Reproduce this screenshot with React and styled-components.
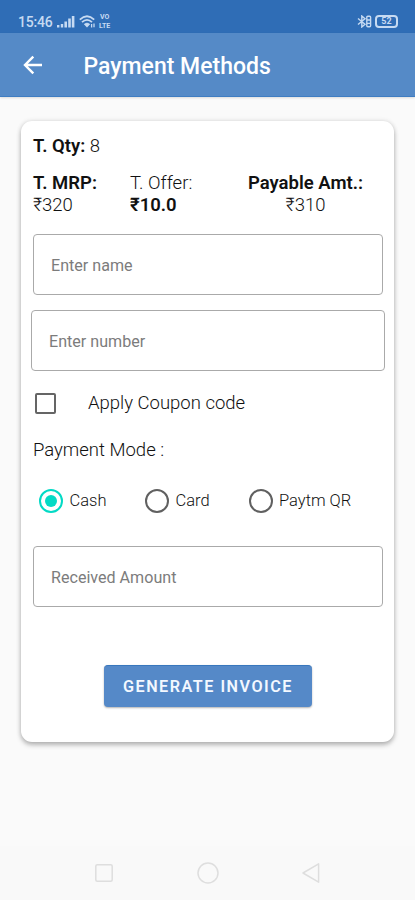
import React, { useState } from 'react';
import styled, { createGlobalStyle } from 'styled-components';

const PAYMENT_MODES = [
  { label: 'Cash', width: '106px' },
  { label: 'Card', width: '103.5px' },
  { label: 'Paytm QR', width: 'auto' },
];

const StatusBar = () => (
  <StatusBarWrapper>
    <Clock>15:46</Clock>
    <svg width='18' height='12' viewBox='0 0 18 12' fill='#c6daf2'>
      <rect x='0' y='9' width='2.4' height='2.5' />
      <rect x='3.8' y='8' width='2.4' height='3.5' />
      <rect x='7.4' y='5.5' width='2.6' height='6' />
      <rect x='11.2' y='2.5' width='2.6' height='9' />
      <rect x='14.8' y='0' width='2.6' height='11.5' />
    </svg>
    <WifiIcon width='17' height='13' viewBox='0 0 17 13' fill='none' stroke='#c6daf2'>
      <path d='M.8 4.6Q8 -2 15.2 4.6M3 7.2Q8 2.6 13 7.2' strokeWidth='1.8' />
      <path d='M5.2 9.2Q8 6.9 10.8 9.2L8 12.2Z' fill='#c6daf2' strokeWidth='.6' />
      <path d='M12.6 9v3.6M15 8.6v3.6' strokeWidth='1.3' />
    </WifiIcon>
    <VoLte>
      <span>VO</span>
      <span>LTE</span>
    </VoLte>
    <StatusRight>
      <svg width='15' height='13' viewBox='0 0 15 13' fill='none' stroke='#c6daf2'>
        <path d='M1 3.5L8 9.2L4.8 12V1L8 3.8L1 9.5' strokeWidth='1.4' />
        <rect x='9.8' y='1.2' width='3.8' height='10.5' rx='1' strokeWidth='1.4' />
        <path d='M10 5h3M10 8.4h3' strokeWidth='1.4' />
      </svg>
      <Battery>52</Battery>
    </StatusRight>
  </StatusBarWrapper>
);

const TextField = ({ label, wide }) => (
  <FieldBox $wide={wide}>
    <FieldLabel>{label}</FieldLabel>
  </FieldBox>
);

const App = () => {
  const [mode, setMode] = useState('Cash');
  const [coupon, setCoupon] = useState(false);

  return (
    <Screen>
      <GlobalStyle />
      <StatusBar />
      <Toolbar>
        <svg width='20' height='20' viewBox='0 0 20 20' fill='none' stroke='#fff' strokeWidth='2.4'>
          <path d='M19 10H2.5M10.3 1.6L2 10L10.3 18.4' />
        </svg>
        <Title>Payment Methods</Title>
      </Toolbar>
      <Content>
        <Card>
          <Quantity>
            <b>T. Qty:</b> 8
          </Quantity>
          <Totals>
            <Total $width='97px'>
              <b>T. MRP:</b>
              <span>₹320</span>
            </Total>
            <Total $width='118px'>
              <span>T. Offer:</span>
              <b>₹10.0</b>
            </Total>
            <Total $align='center'>
              <b>Payable Amt.:</b>
              <span>₹310</span>
            </Total>
          </Totals>
          <TextField label='Enter name' />
          <TextField label='Enter number' wide />
          <CouponRow onClick={() => setCoupon(!coupon)}>
            <CheckBox $checked={coupon} />
            Apply Coupon code
          </CouponRow>
          <SectionLabel>Payment Mode :</SectionLabel>
          <RadioGroup>
            {PAYMENT_MODES.map((v) => (
              <RadioItem key={v.label} $width={v.width} onClick={() => setMode(v.label)}>
                <Radio $checked={mode === v.label} />
                {v.label}
              </RadioItem>
            ))}
          </RadioGroup>
          <TextField label='Received Amount' />
          <InvoiceBtn>GENERATE INVOICE</InvoiceBtn>
        </Card>
      </Content>
      <NavBar>
        <svg width='20' height='20' viewBox='0 0 20 20'>
          <rect x='1.8' y='1.8' width='16.4' height='16.4' rx='1.5' />
        </svg>
        <svg width='22' height='22' viewBox='0 0 22 22'>
          <circle cx='11' cy='11' r='10' />
        </svg>
        <svg width='20' height='22' viewBox='0 0 20 22'>
          <path d='M17.6 1.8V20.2L2 11Z' strokeLinejoin='round' />
        </svg>
      </NavBar>
    </Screen>
  );
};

const GlobalStyle = createGlobalStyle`
  * {
    box-sizing: border-box;
  }
  body {
    margin: 0;
    font-family: Roboto, 'Noto Sans', sans-serif;
    color: #111;
    background: #fafafa;
  }
  b {
    font-weight: 600;
    color: #111;
  }
`;
const Screen = styled.div`
  width: 415px;
  height: 900px;
  display: flex;
  flex-direction: column;
  overflow: hidden;
  background: #fafafa;
`;
const StatusBarWrapper = styled.div`
  height: 33px;
  flex: none;
  display: flex;
  align-items: center;
  padding: 10px 17px 0 18px;
  background: #2f6db6;
`;
const Clock = styled.span`
  width: 39px;
  font-size: 14px;
  font-weight: 500;
  line-height: 16px;
  letter-spacing: -0.2px;
  color: #c6daf2;
`;
const WifiIcon = styled.svg`
  margin: 0 3px 0 4px;
`;
const VoLte = styled.div`
  display: flex;
  flex-direction: column;
  align-items: center;
  font-size: 7px;
  font-weight: 700;
  line-height: 8.5px;
  color: #c6daf2;
`;
const StatusRight = styled.div`
  display: flex;
  align-items: center;
  gap: 3px;
  margin-left: auto;
`;
const Battery = styled.div`
  width: 23px;
  height: 13px;
  border: 2px solid #c6daf2;
  border-radius: 4px;
  font-size: 9px;
  font-weight: 700;
  line-height: 9.5px;
  text-align: center;
  color: #c6daf2;
`;
const Toolbar = styled.header`
  height: 64px;
  flex: none;
  display: flex;
  align-items: center;
  padding-left: 23px;
  background: #558ac7;
  border-bottom: 1px solid #3f7dc2;
  box-shadow: 0 1px 2px rgba(0, 0, 0, 0.12);
`;
const Title = styled.h1`
  margin: 4px 0 0 40.5px;
  font-size: 23px;
  font-weight: 500;
  line-height: 28px;
  color: #fff;
`;
const Content = styled.main`
  flex: 1;
  padding: 24px 21px 0;
`;
const Card = styled.section`
  height: 621px;
  display: flex;
  flex-direction: column;
  padding: 14px 11px 0 12px;
  border-radius: 11px;
  background: #fff;
  box-shadow: 0 3px 5px rgba(0, 0, 0, 0.26), 0 0 5px rgba(0, 0, 0, 0.12);
`;
const Quantity = styled.div`
  font-size: 18.5px;
  font-weight: 300;
  line-height: 22px;
`;
const Totals = styled.div`
  display: flex;
  margin: 15px 0 18px;
`;
const Total = styled.div`
  width: ${({ $width }) => $width || 'auto'};
  display: flex;
  flex-direction: column;
  text-align: ${({ $align }) => $align || 'left'};
  font-size: 18.5px;
  font-weight: 300;
  line-height: 22px;
`;
const FieldBox = styled.div`
  height: 61px;
  flex: none;
  display: flex;
  align-items: center;
  margin: ${({ $wide }) => ($wide ? '15px -2px 0' : '0')};
  padding: 0 17px;
  border: 1.5px solid #aaa;
  border-radius: 4px;
`;
const FieldLabel = styled.span`
  margin-top: 1px;
  font-size: 16.1px;
  color: #7c7c7c;
`;
const CouponRow = styled.div`
  display: flex;
  align-items: center;
  margin-top: 20px;
  padding-left: 2px;
  font-size: 18.5px;
  font-weight: 300;
  line-height: 24px;
`;
const CheckBox = styled.span`
  width: 21px;
  height: 21px;
  margin-right: 32px;
  border: 2px solid #656565;
  border-radius: 2px;
  background: ${({ $checked }) => ($checked ? '#03dac5' : 'transparent')};
`;
const SectionLabel = styled.div`
  margin-top: 23px;
  font-size: 18.5px;
  font-weight: 300;
  line-height: 24px;
`;
const RadioGroup = styled.div`
  display: flex;
  margin: 27px 0 33px 6px;
`;
const RadioItem = styled.div`
  width: ${({ $width }) => $width};
  display: flex;
  align-items: center;
  gap: 6.5px;
  font-size: 16.5px;
  font-weight: 300;
  line-height: 24px;
`;
const Radio = styled.span`
  width: 24px;
  height: 24px;
  padding: 4px;
  border: 2px solid ${({ $checked }) => ($checked ? '#03dac5' : '#606060')};
  border-radius: 50%;
  background: ${({ $checked }) => ($checked ? '#03dac5' : 'transparent')} content-box;
`;
const InvoiceBtn = styled.button`
  width: 208px;
  height: 42px;
  flex: none;
  align-self: center;
  margin-top: 58px;
  padding: 0;
  border: 0;
  border-top: 1.5px solid #3877bd;
  border-radius: 4px;
  background: #5589c8;
  box-shadow: 0 1px 2px rgba(0, 0, 0, 0.3);
  font-family: inherit;
  font-size: 16.2px;
  font-weight: 600;
  letter-spacing: 1.5px;
  color: #f3f8ff;
`;
const NavBar = styled.footer`
  height: 54px;
  flex: none;
  display: flex;
  align-items: center;
  justify-content: space-between;
  padding: 0 94px;
  background: #f9f9f9;
  svg {
    fill: none;
    stroke: #dedede;
    stroke-width: 1.5;
  }
`;

export default App;
